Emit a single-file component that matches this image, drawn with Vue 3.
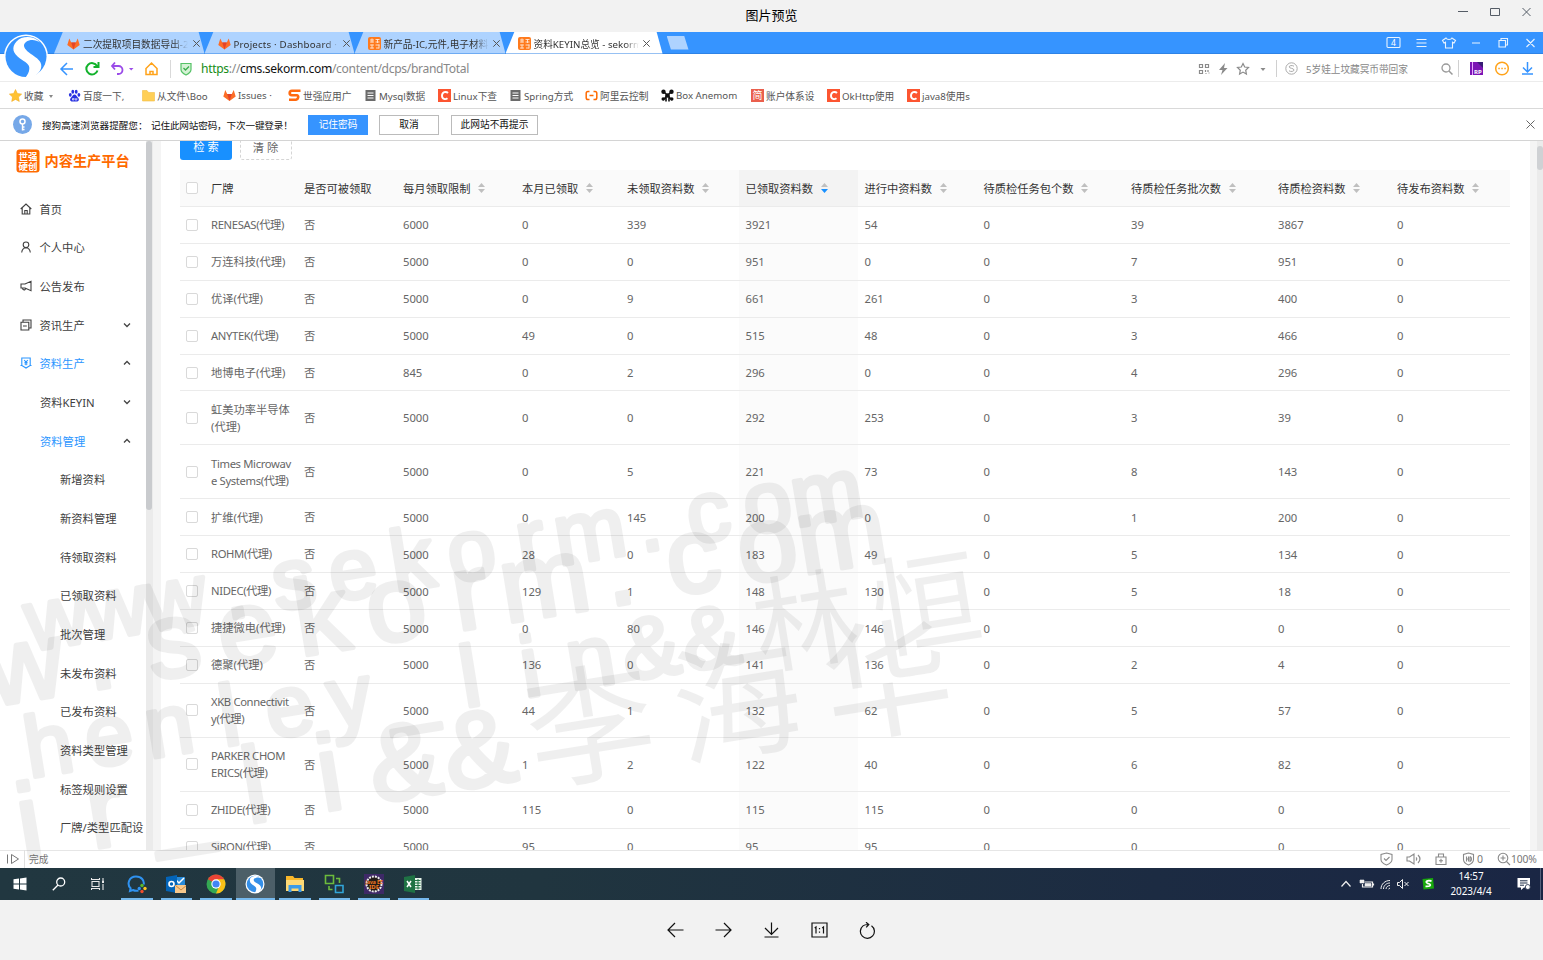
<script setup>
const tabs = [
  { icon: 'fox', text: '二次提取项目数据导出-2' },
  { icon: 'fox', text: 'Projects · Dashboard · ', wide: true },
  { icon: 'sek', text: '新产品-IC,元件,电子材料' },
  { icon: 'sek', text: '资料KEYIN总览 - sekorm', active: true },
]
const marks = [
  { icon: 'star', text: '收藏' },
  { icon: 'paw', text: '百度一下,' },
  { icon: 'folder', text: '从文件\\Boo' },
  { icon: 'fox', text: 'Issues ·' },
  { icon: 'swoosh', text: '世强应用广' },
  { icon: 'doc', text: 'Mysql数据' },
  { icon: 'c', text: 'Linux下查' },
  { icon: 'doc', text: 'Spring方式' },
  { icon: 'ali', text: '阿里云控制' },
  { icon: 'box', text: 'Box Anemom' },
  { icon: 'jian', text: '账户体系设' },
  { icon: 'c', text: 'OkHttp使用' },
  { icon: 'c', text: 'java8使用s' },
]
const menu = [
  { t: '首页', l: 1, icon: 'home' },
  { t: '个人中心', l: 1, icon: 'user' },
  { t: '公告发布', l: 1, icon: 'horn' },
  { t: '资讯生产', l: 1, icon: 'copy', arrow: 'down' },
  { t: '资料生产', l: 1, icon: 'yen', arrow: 'up', on: true },
  { t: '资料KEYIN', l: 2, arrow: 'down' },
  { t: '资料管理', l: 2, arrow: 'up', on: true },
  { t: '新增资料', l: 3 },
  { t: '新资料管理', l: 3 },
  { t: '待领取资料', l: 3 },
  { t: '已领取资料', l: 3 },
  { t: '批次管理', l: 3 },
  { t: '未发布资料', l: 3 },
  { t: '已发布资料', l: 3 },
  { t: '资料类型管理', l: 3 },
  { t: '标签规则设置', l: 3 },
  { t: '厂牌/类型匹配设', l: 3 },
]
const heads = ['厂牌', '是否可被领取', '每月领取限制', '本月已领取', '未领取资料数', '已领取资料数', '进行中资料数', '待质检任务包个数', '待质检任务批次数', '待质检资料数', '待发布资料数']
const rows = [
  [['RENESAS(代理)'], 6000, 0, 339, 3921, 54, 0, 39, 3867, 0],
  [['万连科技(代理)'], 5000, 0, 0, 951, 0, 0, 7, 951, 0],
  [['优译(代理)'], 5000, 0, 9, 661, 261, 0, 3, 400, 0],
  [['ANYTEK(代理)'], 5000, 49, 0, 515, 48, 0, 3, 466, 0],
  [['地博电子(代理)'], 845, 0, 2, 296, 0, 0, 4, 296, 0],
  [['虹美功率半导体', '(代理)'], 5000, 0, 0, 292, 253, 0, 3, 39, 0],
  [['Times Microwav', 'e Systems(代理)'], 5000, 0, 5, 221, 73, 0, 8, 143, 0],
  [['扩维(代理)'], 5000, 0, 145, 200, 0, 0, 1, 200, 0],
  [['ROHM(代理)'], 5000, 28, 0, 183, 49, 0, 5, 134, 0],
  [['NIDEC(代理)'], 5000, 129, 1, 148, 130, 0, 5, 18, 0],
  [['捷捷微电(代理)'], 5000, 0, 80, 146, 146, 0, 0, 0, 0],
  [['德聚(代理)'], 5000, 136, 0, 141, 136, 0, 2, 4, 0],
  [['XKB Connectivit', 'y(代理)'], 5000, 44, 1, 132, 62, 0, 5, 57, 0],
  [['PARKER CHOM', 'ERICS(代理)'], 5000, 1, 2, 122, 40, 0, 6, 82, 0],
  [['ZHIDE(代理)'], 5000, 115, 0, 115, 115, 0, 0, 0, 0],
  [['SiRON(代理)'], 5000, 95, 0, 95, 95, 0, 0, 0, 0],
]
const stamps = [
  { x: 61, y: 646, step: 60, size: 86, text: 'www.sekorm.com' },
  { x: 53, y: 774, step: 61, size: 86, text: 'henley_lin&&' },
  { x: 30, y: 700, step: 75.2, size: 107, text: 'w.sekorm.com' },
  { x: 35, y: 858, step: 76, size: 107, text: 'ir_li&&' },
]
const hans = [
  { x: 805, y: 620, s: 104, t: '林' },
  { x: 926, y: 602, s: 108, t: '恒' },
  { x: 590, y: 724, s: 128, t: '李' },
  { x: 737, y: 700, s: 128, t: '海' },
  { x: 887, y: 678, s: 128, t: '华' },
]
const apps = ['chat', 'outlook', 'chrome', 'sogou', 'files', 'vm', 'javaee', 'excel']
// Latin brand names are set slightly tighter than Chinese ones.
const isLatin = (s) => /^[A-Za-z]/.test(s)
</script>

<template>
  <div class="viewer">
    <header class="title">
      <span>图片预览</span>
      <svg class="winbtns" width="76" height="14" viewBox="0 0 76 14" fill="none" stroke="#555c66" stroke-width="1">
        <path d="M0 6.5H10M32.5 3.5h9v7h-9zM64.500 3l8 8M72.500 3l-8 8" />
      </svg>
    </header>

    <div class="shot">
      <svg class="logo" width="48" height="48" viewBox="0 0 48 48">
        <circle cx="24" cy="23.500" r="22" fill="#fff" />
        <circle cx="24" cy="23.500" r="20.500" fill="#3694ff" />
        <path d="M38 9.500C32 2.500 20 2.500 14.500 8.500C9 14.500 11 20.500 18 25.500C23 29 28 31 27.300 36C27 39.500 25.500 41.500 23.500 44.500L31 44C37.500 40.500 41 35 38.500 29.500C36.500 25.500 31 22.500 27 19.500C22.500 16 20 12 24 9C28 6 34 6.500 38 9.500Z" fill="#fff" />
      </svg>
      <div class="tabbar">
        <div class="tabs">
          <div v-for="(t, i) in tabs" :key="i" class="tab" :class="{ active: t.active, wide: t.wide }">
            <svg v-if="t.icon === 'fox'" width="13" height="12" viewBox="0 0 13 12">
              <path d="M6.500 11.500 .3 7 2.300.5 4.200 4.500h4.600L10.700.5l2 6.500z" fill="#fc6d26" /><path d="M6.500 11.500 4.200 4.500h4.600z" fill="#e24329" />
            </svg>
            <svg v-else width="13" height="13" viewBox="0 0 13 13"><rect width="13" height="13" rx="2" fill="#ff7a1c" /><path d="M2 3h4M2 5h4M4 1.500v4M7.500 2.500h4M7.500 5h4M9.500 2v4M2 8h4M2 11h4M4 7.500v4M7.500 8h4M8 11h3M11 7.500v4" stroke="#ffe9d8" stroke-width=".9" /></svg>
            <span class="tabtext">{{ t.text }}</span>
            <svg width="9" height="9" viewBox="0 0 9 9" stroke="#555" fill="none"><path d="m1.300 1.300 6.400 6.400M7.700 1.300 1.300 7.700" /></svg>
          </div>
        </div>
        <i class="newtab"></i>
        <svg class="ctl" width="150" height="16" viewBox="0 0 150 16" fill="none" stroke="#e8f3ff" stroke-width="1.100">
          <rect x="1" y="2.500" width="13" height="10" rx="1" /><text x="7.500" y="11" text-anchor="middle" font-size="8.500" stroke="none" fill="#fff">4</text>
          <path d="M30.500 4.500h10M30.500 8h10M30.500 11.500h10M60 3l-3.500 2.500 1.500 2.500 1.500-.8V13h7V7.200l1.500.8 1.500-2.500L66 3c-1 2-5 2-6 0zM86 8h8M113 5.500h6.500v6.500H113zM115 5.500v-2h6.500V10h-2M140.500 4l8 8M148.500 4l-8 8" />
        </svg>
      </div>

      <div class="nav">
        <svg class="navicons" width="134" height="20" viewBox="0 0 134 20" fill="none" stroke-width="1.800">
          <path d="M14 10H2.500M8 4 2 10l6 6" stroke="#3694ff" stroke-width="1.500" />
          <path d="M38 7a5.700 5.700 0 1 0 .5 4.500M39.500 3v5h-5" stroke="#12b22c" stroke-width="2" />
          <path d="M56 3.500 53 7l3 3.500M53 7h6.500a4 4 0 0 1 0 8H58" stroke="#9a4be8" /><path d="m70 9 2.200 2.500L74.500 9z" fill="#9a4be8" />
          <path d="M87 9.500 92.500 4 98 9.500M87 9v6.500h11V9M91 15.500v-3h3v3" stroke="#ffa31a" stroke-width="1.500" />
          <path d="M111.500 1v18" stroke="#d9d9d9" stroke-width="1" />
          <path d="M122 4.500h10v6c0 3-3 4.500-5 5.500-2-1-5-2.500-5-5.500z" fill="#d5f2d5" stroke="#55c266" stroke-width="1.200" /><path d="m124.500 9 2 2 3.500-3.500" stroke="#39ad4b" stroke-width="1.300" />
        </svg>
        <span class="url"><b class="g">https</b>://<b>cms.sekorm.com</b>/content/dcps/brandTotal</span>
        <svg class="navr" width="72" height="20" viewBox="0 0 72 20" fill="none" stroke="#8a8a8a" stroke-width="1.200">
          <path d="M1.500 5.500h3v3h-3zM7.500 5.500h3v3h-3zM1.500 11.500h3v3h-3zM7.500 11v2M10 11v2M7.500 14.500h1M10.500 14h1" />
          <path d="m27 4-6 7h3.500L23 16l6.500-7H26z" fill="#8a8a8a" stroke="none" />
          <path d="m45 4.500 1.700 3.500 3.800.5-2.800 2.700.7 3.800-3.400-1.900-3.400 1.900.7-3.800L39.500 8.500l3.800-.5z" />
          <path d="m62.500 9 2.500 3L67.500 9z" fill="#8a8a8a" stroke="none" />
        </svg>
        <i class="sep"></i>
        <svg class="sg" width="13" height="13" viewBox="0 0 13 13" fill="none" stroke="#aaa"><circle cx="6.500" cy="6.500" r="5.700" /><path d="M9 4.200C7 3 4 3.500 4.200 5c.2 1.700 4.800 1 4.800 3 0 1.500-3 2-5 .8" /></svg>
        <span class="hot">5岁娃上坟藏冥币带回家</span>
        <svg class="ext" width="98" height="20" viewBox="0 0 98 20" fill="none">
          <circle cx="5" cy="9" r="4" stroke="#999" stroke-width="1.300" /><path d="m8 12 3.500 3.500" stroke="#999" stroke-width="1.500" />
          <path d="M17.500 1v17" stroke="#d0d0d0" />
          <rect x="29" y="3" width="13" height="13" fill="#7c14b5" /><path d="M31.500 3v13" stroke="#e9a7ff" /><path d="M36 3h6v6z" fill="#371c74" /><text x="33" y="14.500" font-size="6" font-weight="700" fill="#fff">RP</text>
          <circle cx="61" cy="9.500" r="6.300" stroke="#ffa31a" stroke-width="1.500" /><path d="M57.300 9.500h1.500M60.300 9.500h1.500M63.300 9.500h1.500" stroke="#ffa31a" stroke-width="1.400" />
          <path d="M86.500 3v10M82 8.500l4.500 4.500L91 8.500M81 15h11" stroke="#3694ff" stroke-width="1.500" />
        </svg>
      </div>

      <div class="marks">
        <div v-for="(m, i) in marks" :key="i" class="mark">
          <svg width="13" height="13" viewBox="0 0 13 13">
            <path v-if="m.icon === 'star'" d="m6.500.5 1.900 4 4.300.6-3.200 3 .8 4.400-3.800-2.100-3.800 2.100.8-4.400-3.200-3 4.300-.6z" fill="#ffc233" stroke="#f1a91d" stroke-width=".5" />
            <g v-else-if="m.icon === 'paw'" fill="#2932e1"><ellipse cx="2.300" cy="5.800" rx="1.400" ry="1.900" /><ellipse cx="4.800" cy="2.800" rx="1.400" ry="2" /><ellipse cx="8.200" cy="2.800" rx="1.400" ry="2" /><ellipse cx="10.900" cy="5.800" rx="1.400" ry="1.900" /><path d="M6.500 5.500c1.600 0 2 1.700 3.300 2.900 2 1.700 1 4-1 4-1.300 0-3.300 0-4.600 0-2 0-3-2.300-1-4C4.500 7.200 4.900 5.500 6.500 5.500z" /><path d="M4.500 9.500h1.300v1.500H4.500zM7.200 9v2h1.600V9" fill="none" stroke="#fff" stroke-width=".7" /></g>
            <path v-else-if="m.icon === 'folder'" d="M.5 1.500h4.500l1.500 2h6v8.500H.5z" fill="#ffcf56" stroke="#f2bd44" stroke-width=".6" />
            <g v-else-if="m.icon === 'fox'"><path d="M6.500 12 .3 7.500l2-6.500 1.900 4h4.600l1.900-4 2 6.500z" fill="#fc6d26" /><path d="M6.500 12 4.200 5h4.600z" fill="#e24329" /></g>
            <path v-else-if="m.icon === 'swoosh'" d="M12.500 1.800H4C1 2 .8 6 4 6.300h5c2 .3 1.500 4-1 4.400H1" fill="none" stroke="#ff6a10" stroke-width="2.600" />
            <g v-else-if="m.icon === 'doc'"><rect x="1.500" y="1" width="10" height="11" fill="#6b6b6b" /><path d="M3.500 4h6M3.500 6.500h6M3.500 9h6" stroke="#fff" /></g>
            <g v-else-if="m.icon === 'c'"><rect width="13" height="13" fill="#fc5531" /><path d="M10 4C8 2 4 3 4 6.800c0 3.500 3.500 4 5.500 2.500" fill="none" stroke="#fff" stroke-width="1.900" /></g>
            <path v-else-if="m.icon === 'ali'" d="M4.500 2.500H3c-1 0-1.800.5-1.800 1.800v4.400c0 1.300.8 1.800 1.800 1.800h1.500M8.500 2.500H10c1 0 1.800.5 1.800 1.800v4.400c0 1.300-.8 1.800-1.800 1.800H8.500M4.500 6.500h4" fill="none" stroke="#ff6a00" stroke-width="1.500" />
            <g v-else-if="m.icon === 'box'" fill="#111"><circle cx="2.500" cy="2.800" r="2.200" /><circle cx="10.500" cy="2.800" r="2.200" /><circle cx="2.200" cy="10" r="1.700" /><circle cx="10.800" cy="10" r="1.700" /><circle cx="6.500" cy="6.500" r="2.300" /><path d="m2 2 9 9M11 2l-9 9M5 7v5.500M8 7v5.500" stroke="#111" stroke-width="1.600" /></g>
            <g v-else><rect width="13" height="13" fill="#ea5f4d" /><text x="6.500" y="10.300" font-size="10" text-anchor="middle" fill="#fff">简</text></g>
          </svg>
          <span>{{ m.text }}</span>
          <i v-if="i === 0" class="caret"></i>
        </div>
      </div>

      <div class="notice">
        <svg width="19" height="19" viewBox="0 0 19 19"><circle cx="9.500" cy="9.500" r="9.500" fill="#76a8e8" /><circle cx="9.500" cy="6.500" r="2.500" fill="none" stroke="#fff" stroke-width="1.500" /><path d="M9.500 9v6.500M9.500 12h2M9.500 14.500h2" stroke="#fff" stroke-width="1.400" /></svg>
        <span class="n1">搜狗高速浏览器提醒您：</span>
        <span class="n2">记住此网站密码，下次一键登录！</span>
        <button class="nb p">记住密码</button>
        <button class="nb q">取消</button>
        <button class="nb r">此网站不再提示</button>
        <svg class="nx" width="9" height="9" viewBox="0 0 9 9" stroke="#666" fill="none"><path d="m.5.500 8 8M8.500.5l-8 8" /></svg>
      </div>

      <main class="main">
        <aside class="side">
          <div class="brand">
            <svg width="25" height="25" viewBox="0 0 25 25"><rect x=".5" y=".5" width="23" height="23" rx="3" fill="#ff6a00" /><g fill="#fff" font-size="9.500" font-weight="700" text-anchor="middle"><text x="7.300" y="10.500">世</text><text x="16.800" y="10.500">强</text><text x="7.300" y="20.500">硬</text><text x="16.800" y="20.500">创</text></g></svg>
            <span>内容生产平台</span>
          </div>
          <div v-for="(m, i) in menu" :key="i" class="mi" :class="['l' + m.l, { on: m.on }]">
            <svg v-if="m.icon" class="mico" width="12" height="12" viewBox="0 0 12 12" fill="none" stroke="currentColor" stroke-width="1.100">
              <path v-if="m.icon === 'home'" d="M.7 6 6 1l5.300 5M2.200 5v6h7.600V5M4.800 11V7.500h2.400V11" />
              <path v-else-if="m.icon === 'user'" d="M6 1a2.800 2.800 0 1 1 0 5.600A2.800 2.800 0 0 1 6 1zM1.700 11.500C2 8.700 3.500 7 6 6.800c2.500.2 4 1.900 4.300 4.700" />
              <path v-else-if="m.icon === 'horn'" d="M11 1.300v9.400L5 8H1V4h4zM2.500 8c0 2.500 3 2.500 3 .3" />
              <path v-else-if="m.icon === 'copy'" d="M1 3.200h7.800V11H1zM3 3V1h8v8H9M3 7h3.800" />
              <path v-else d="M1.800 1h8.400v7.500L6 11 1.800 8.500zM.5 8.500h1.300M10.200 8.500h1.300M4.200 3 6 5.200 7.800 3M6 5.200v3M4.500 5.500h3M4.500 7h3" />
            </svg>
            <span>{{ m.t }}</span>
            <svg v-if="m.arrow" class="arr" width="8" height="6" viewBox="0 0 8 6" fill="none" stroke="#444" stroke-width="1.300"><path :d="m.arrow === 'up' ? 'M1 4.500 4 1.500 7 4.500' : 'M1 1.500 4 4.500 7 1.500'" /></svg>
          </div>
        </aside>
        <div class="sscroll"><i></i></div>
        <div class="gut"></div>
        <section class="content">
          <div class="btns"><button class="search">检 索</button><button class="clear">清 除</button></div>
          <div class="table">
            <div class="row head">
              <div class="cell"><i class="cb"></i></div>
              <div v-for="(h, i) in heads" :key="h" class="cell" :class="{ hl: i === 5 }">
                <span>{{ h }}</span>
                <svg v-if="i > 1" class="sort" width="7" height="10" viewBox="0 0 7 10"><path d="M0 4 3.500 0 7 4z" fill="#bfbfbf" /><path d="M0 6 3.500 10 7 6z" :fill="i === 5 ? '#1890ff' : '#bfbfbf'" /></svg>
              </div>
            </div>
            <div v-for="(r, k) in rows" :key="k" class="row" :class="{ tall: r[0].length > 1 }">
              <div class="cell"><i class="cb"></i></div>
              <div class="cell name" :class="{ latin: isLatin(r[0][0]) }"><span v-for="n in r[0]" :key="n">{{ n }}</span></div>
              <div class="cell can">否</div>
              <div v-for="(v, i) in r.slice(1)" :key="i" class="cell" :class="{ hl: i === 3 }">{{ v }}</div>
            </div>
          </div>
        </section>
        <div class="gut2"></div>
        <div class="rscroll"><i></i></div>
      </main>

      <div class="status">
        <svg width="26" height="18" viewBox="0 0 26 18" fill="none" stroke="#777"><path d="M7.500 4.500v9M11.500 4.500v9l7-4.500z" /><path d="M24.500 0v18" stroke="#e0e0e0" /></svg>
        <span class="done">完成</span>
        <svg class="sticons" width="100" height="16" viewBox="0 0 100 16" fill="none" stroke="#8a8a8a" stroke-width="1.100">
          <path d="M6.500 2 12 3.500v5C12 11.500 9 13 6.500 14 4 13 1 11.500 1 8.500v-5zM4 7.500l2 2L9.500 6" />
          <path d="M27 6h2.500L34 3v10l-4.500-3H27zM36 6.500c1 1 1 2 0 3M38 4c2.500 2.500 2.500 5.500 0 8" />
          <path d="M56 6h10v7.500H56zM58.500 6V3h5v3M61 7.800v4M59 9.800h4" />
          <path d="M88.500 2 93.500 3.500v5c0 3-2.500 4.500-5 5.500-2.500-1-5-2.500-5-5.500v-5zM86.500 5.500v5M88.500 5.500v5M86.500 8h2M90 5.500v5c2-.5 2-4.500 0-5" />
        </svg>
        <span class="zero">0</span>
        <svg width="14" height="16" viewBox="0 0 14 16" fill="none" stroke="#8a8a8a" stroke-width="1.100"><circle cx="6" cy="7" r="4.800" /><path d="M3.500 7h5M6 4.500v5M9.500 10.500l3.500 3.500" /></svg>
        <span class="pct">100%</span>
      </div>

      <div class="task">
        <div class="sys"><svg width="14" height="14" viewBox="0 0 14 14" fill="#fff"><path d="M.5 2.300 6 1.500v5H.5zM7 1.400l6.500-.9v6H7zM.5 7.500H6v5L.5 11.700zM7 7.500h6.500v6L7 12.600z" /></svg></div>
        <div class="sys"><svg width="14" height="14" viewBox="0 0 14 14" fill="none" stroke="#fff" stroke-width="1.300"><circle cx="8.700" cy="5" r="4" /><path d="M6 8 .8 13.300" /></svg></div>
        <div class="sys"><svg width="14" height="14" viewBox="0 0 14 14" fill="none" stroke="#e8e8e8" stroke-width="1.100"><path d="M.5 1v1.500h8V1M.5 13v-1.500h8V13M1 4.500h7v5H1zM12 1v2.500M12 7v6" /><path d="M11 3.500h2V6h-2z" fill="#e8e8e8" stroke="none" /></svg></div>
        <div v-for="a in apps" :key="a" class="app" :class="{ cur: a === 'sogou' }">
          <svg width="20" height="20" viewBox="0 0 20 20">
            <g v-if="a === 'chat'"><path d="M11.500 16.500c-2 .5-4 .3-5.500-.5L3 17l.6-2.700C-.5 10 2 2.500 9 2.500c5.500 0 8.500 4 7.700 8" fill="none" stroke="#2f92f0" stroke-width="2" /><circle cx="15" cy="11.500" r="1.700" fill="#59b82c" /><circle cx="18" cy="14.500" r="1.700" fill="#ffc51f" /><circle cx="15" cy="17.500" r="1.700" fill="#f24d2c" /><circle cx="12.300" cy="14.500" r="1.700" fill="#2f92f0" /></g>
            <g v-else-if="a === 'outlook'"><path d="M9 3h10v11H9z" fill="#2689d8" /><path d="m10 6 3 3 5-5" stroke="#fff" stroke-width="1.500" fill="none" /><path d="m0 3 11-2v18L0 17z" fill="#0364b8" /><circle cx="5.500" cy="10" r="2.500" fill="none" stroke="#fff" stroke-width="1.600" /><path d="M9 11h12v8H9z" fill="#f8c88b" /><path d="m9 11 6 5 6-5" fill="none" stroke="#c98740" /></g>
            <g v-else-if="a === 'chrome'"><circle cx="10" cy="10" r="9.500" fill="#34a853" /><path d="M10 10 1.800 5.300A9.500 9.500 0 0 1 18.200 5.300z" fill="#ea4335" /><path d="M10 19.500 14 10l4.200-4.700A9.500 9.500 0 0 1 10 19.500z" fill="#fbc116" /><path d="M10 5.300h8.200L15 10z" fill="#fbc116" /><circle cx="10" cy="10" r="4.700" fill="#fff" /><circle cx="10" cy="10" r="3.600" fill="#4285f4" /></g>
            <g v-else-if="a === 'sogou'"><circle cx="10" cy="10" r="9.500" fill="#fff" /><circle cx="10" cy="10" r="8.300" fill="#348fe8" /><path d="M16 4C12 .5 3.500 2 5 7.500c1 4 6.500 4 6.300 7.500-.2 2-1 3-1.700 4l3-.3c3.500-2 4.500-5 2.500-7.300C13.500 9.500 8.500 8.500 8.700 5.800c.3-2 4.500-3 7.300-1.800z" fill="#fff" /></g>
            <g v-else-if="a === 'files'"><path d="M1 2h7l1.500 2H18v13H1z" fill="#f7b72b" /><path d="M1 6h18v11H1z" fill="#ffd975" /><path d="M3.500 18v-7h13v7h-3v-3.500h-7V18z" fill="#3c9be8" /></g>
            <g v-else-if="a === 'vm'" fill="none" stroke-width="1.600"><path d="M1.500 1.500h8v8h-8z" stroke="#6cbb3c" /><path d="M11.500 11.500h7.500v7h-7.500z" stroke="#32a5d8" /><path d="M12 4.500h3.500V9M5 12v3.500h3.500" stroke="#6cbb3c" /></g>
            <g v-else-if="a === 'javaee'"><rect width="20" height="20" fill="#3e2967" /><circle cx="10" cy="10" r="7.500" fill="#231b19" stroke="#ececec" stroke-width="2" stroke-dasharray="2 1" /><text x="10" y="9.500" text-anchor="middle" font-size="5" font-weight="700" fill="#f47b20">Java EE</text><text x="10" y="15" text-anchor="middle" font-size="6" font-weight="700" fill="#f47b20">IDE</text></g>
            <g v-else><path d="M10 4h8.500v12H10z" fill="#e9f5ec" /><path d="M12 6.500h5.500M12 9h5.500M12 11.500h5.500M12 14h5.500M15 5v10.500" stroke="#1f7244" /><path d="m1 3 11-2v18L1 17z" fill="#1f7244" /><path d="m4 7 4 6M8 7l-4 6" stroke="#fff" stroke-width="1.500" /></g>
          </svg>
        </div>
        <svg class="tray" width="96" height="16" viewBox="0 0 96 16" fill="none" stroke="#f0f0f0" stroke-width="1.200">
          <path d="m1.500 10.500 4.500-5 4.500 5" />
          <path d="M24.500 6h8v5h-10V8M33.500 7.500v2" /><path d="M20 4h4v3h-4zM25 7.500h6v2.500h-6z" fill="#f0f0f0" stroke-width=".6" />
          <path d="M41 13c0-5 4-8.500 9-8.500M43.500 13c0-3.500 3-6 6.500-6M46 13c0-2 2-3.500 4-3.500M48.500 13l1.500-1" stroke-width="1" />
          <path d="M57.500 6.500h2l3-3v9l-3-3h-2zM64.500 6l4 4M68.500 6l-4 4" stroke-width="1" />
          <path d="m82.500 3 10.500-1 1 10.500-10.500 1z" fill="#18a80c" stroke="none" /><path d="M91.500 5c-5-1-6.500 1-4 2.300 4 .7 4 3.500-2 3" stroke="#fff" stroke-width="1.800" />
        </svg>
        <div class="clock"><span>14:57</span><span>2023/4/4</span></div>
        <svg class="note" width="14" height="14" viewBox="0 0 14 14"><path d="M.5 1h12.500v9.500H7L4 13v-2.500H.5z" fill="#fff" /><path d="M3 3.800h7.500M3 6h7.500M3 8.200h4" stroke="#1b2a44" /><circle cx="10.800" cy="10" r="2.500" fill="#fff" stroke="#1b2a44" stroke-width=".8" /></svg>
        <i class="edge"></i>
      </div>

      <svg class="stamp" width="1543" height="836" viewBox="0 32 1543 836">
        <g v-for="(s, i) in stamps" :key="i" opacity=".06" :transform="`translate(${s.x} ${s.y}) rotate(-9.200)`" :font-size="s.size" text-anchor="middle" stroke="#000" stroke-width="4.500" stroke-linejoin="round">
          <text v-for="(c, j) in s.text" :key="j" :x="j * s.step" y="0">{{ c }}</text>
        </g>
        <text v-for="h in hans" :key="h.t" class="han" opacity=".06" :transform="`translate(${h.x} ${h.y}) rotate(-9.200)`" :font-size="h.s" x="0" :y="h.s * 0.38" text-anchor="middle">{{ h.t }}</text>
      </svg>
    </div>

    <footer class="tools">
      <svg width="17" height="16" viewBox="0 0 17 16"><path d="M16.500 8H1M8 1 1 8l7 7" /></svg>
      <svg width="17" height="16" viewBox="0 0 17 16"><path d="M.5 8H16M9 1l7 7-7 7" /></svg>
      <svg width="17" height="16" viewBox="0 0 17 16"><path d="M8.500.5v11.500M2 6l6.500 6.500L15 6M1.500 15h14" /></svg>
      <svg width="17" height="16" viewBox="0 0 17 16"><path d="M1 1h15v14H1zM3.700 6 5 5v6.500M11.200 6l1.300-1v6.500M8.500 6v1.200M8.500 9.500v1.200" /></svg>
      <svg width="17" height="17" viewBox="0 0 17 17"><path d="M12.500 3.700a7 7 0 1 1-8.500.2q2-1.600 5.500-1.400M7 .2l2.800 2.300L7.200 5.400" /></svg>
    </footer>
  </div>
</template>

<style>
html, body { margin: 0; overflow: hidden; }
</style>
<style scoped>
.viewer { width: 1543px; height: 960px; background: #f2f2f2; display: flex; flex-direction: column; font-family: "Noto Sans", "Noto Sans CJK SC", sans-serif; color: #333; overflow: hidden; }
.viewer * { box-sizing: border-box; }
svg { flex: none; display: block; }
i { display: block; font-style: normal; }
button { font-family: inherit; margin: 0; padding: 0; }
.title { height: 32px; flex: none; display: flex; align-items: center; justify-content: center; position: relative; font-size: 13px; color: #000; padding-bottom: 3px; }
.winbtns { position: absolute; right: 9px; top: 5px; }
.shot { height: 868px; flex: none; position: relative; background: #fff; display: flex; flex-direction: column; overflow: hidden; }
.logo { position: absolute; left: 2px; top: 1px; z-index: 3; }
.tabbar { height: 22px; flex: none; background: #3694ff; border-bottom: 1px solid #2e83e6; display: flex; align-items: center; }
.tabs { display: grid; grid-template-columns: 150.500px 150px 151px 157px; margin-left: 54px; height: 22px; }
.tab { height: 22px; display: flex; align-items: center; padding-left: 13px; background: #aed3ff; clip-path: polygon(9px 0, calc(100% - 6px) 0, 100% 100%, 0 100%); font-size: 9.700px; padding-top: 3px; }
.tab.active { background: #fff; padding-left: 12px; }
.tab.wide { letter-spacing: .2px; }
.tab svg { margin-top: -1px; }
.tab svg:last-child { margin-left: -1.500px; }
.tabtext { width: 105px; flex: none; margin: 0 5px 0 3px; overflow: hidden; white-space: nowrap; -webkit-mask-image: linear-gradient(90deg, #000 86%, transparent); mask-image: linear-gradient(90deg, #000 86%, transparent); }
.newtab { width: 22px; height: 14px; background: #aed3ff; clip-path: polygon(0 0, 80% 0, 100% 100%, 20% 100%); margin-left: 4px; }
.ctl { margin-left: auto; margin-right: 7.500px; }
.nav { height: 28px; flex: none; display: flex; align-items: center; border-bottom: 1px solid #ececec; padding-top: 2px; }
.navicons { margin-left: 59px; }
.url { margin-left: 8px; font-size: 12.100px; letter-spacing: -.33px; color: #888; white-space: nowrap; }
.url b { font-weight: 400; color: #111; }
.url b.g { color: #168d16; }
.navr { margin-left: auto; }
.sep { width: 1px; height: 17px; background: #d0d0d0; margin-left: 6px; }
.sg { margin-left: 8px; }
.hot { font-size: 9.700px; color: #888; width: 135px; margin-left: 8px; white-space: nowrap; letter-spacing: -.05px; }
.ext { margin-right: 4px; }
.marks { height: 27px; flex: none; display: grid; grid-template-columns: 59px 74px 81px 65px 76px 74px 71px 76px 76px 90px 76px 80px 80px; padding-left: 9px; border-bottom: 1px solid #d9d9d9; align-items: center; font-size: 9.700px; color: #555; padding-top: 1px; }
.mark { display: flex; align-items: center; gap: 2px; white-space: nowrap; }
.caret { border: 2.500px solid transparent; border-top: 3px solid #888; margin: 3px 0 0 4px; }
.notice { height: 32px; flex: none; display: flex; align-items: center; border-bottom: 1px solid #d4d4d4; padding-left: 13px; font-size: 9.600px; color: #111; white-space: nowrap; }
.n1 { margin-left: 10px; width: 109px; }
.n2 { width: 157px; letter-spacing: -.15px; }
.nb { height: 20px; font-size: 9.700px; border: 1px solid #bbb; background: #fff; color: #111; line-height: 17px; }
.nb.p { width: 60px; background: #3694ff; border-color: #3694ff; color: #fff; }
.nb.q { width: 60px; margin-left: 11px; }
.nb.r { width: 87px; margin-left: 12px; }
.nx { margin-left: auto; margin-right: 8px; }
.main { flex: 1; min-height: 0; display: flex; overflow: hidden; border-bottom: 1px solid #e6e6e6; }
.side { width: 145.500px; flex: none; overflow: hidden; }
.brand { height: 48.400px; display: flex; align-items: center; padding: 0 0 7.500px 15.500px; gap: 4px; color: #ff6a00; font-weight: 700; font-size: 14.200px; white-space: nowrap; }
.brand span { margin-top: -2px; }
.mi { height: 38.680px; display: flex; align-items: center; font-size: 11.300px; color: #404040; white-space: nowrap; position: relative; }
.l1 { padding-left: 20px; }
.l2 { padding-left: 40px; }
.l3 { padding-left: 60px; }
.mico { margin-right: 7.500px; }
.on { color: #2b96ff; }
.arr { margin-left: auto; margin-right: 15px; }
.sscroll { width: 7.500px; background: #ebebeb; flex: none; }
.sscroll i { width: 6.500px; height: 369px; background: #c9cbce; border-radius: 4px; }
.gut { width: 8px; background: #f4f4f4; flex: none; }
.content { width: 1369px; flex: none; padding: 0 20px 0 19px; overflow: hidden; }
.btns { display: flex; height: 28.500px; align-items: flex-start; gap: 7.500px; }
.btns button { height: 26px; margin-top: -7px; width: 52px; font-size: 11.300px; border-radius: 3px; line-height: 26px; }
.search { background: #1890ff; border: 0; color: #fff; }
.btns .clear { background: #fff; border: 1px dashed #d5d5d5; color: #666; }
.row { display: grid; grid-template-columns: 24.500px 93px 99px 119px 105px 118.500px 119px 119px 147.500px 147px 119px 119.500px; height: 36.950px; border-bottom: 1px solid #ebebeb; font-size: 11.250px; color: #666; }
.row.tall { height: 53.900px; }
.row.head { background: #fafafa; color: #333; height: 37.300px; }
.cell { display: flex; align-items: center; padding-left: 6.500px; white-space: nowrap; }
.cell.name { flex-direction: column; align-items: flex-start; justify-content: center; line-height: 16.900px; padding-top: 1.500px; }
.cell.latin { letter-spacing: -.35px; }
.cell.can { padding-bottom: 1.500px; }
.cell:first-child { padding-left: 6px; }
.hl { background: #fbfbfb; }
.head .hl { background: #f3f3f3; }
.cb { width: 12px; height: 12px; border: 1px solid #d9d9d9; border-radius: 2px; background: #fff; }
.sort { margin-left: 7.500px; }
.gut2 { width: 7px; background: #f4f4f4; flex: none; }
.rscroll { width: 6px; background: #ebebeb; flex: none; padding-top: 5px; }
.rscroll i { height: 24px; background: #cfd1d4; border-radius: 3px; }
.status { height: 17px; flex: none; display: flex; align-items: center; font-size: 9.700px; color: #777; padding-bottom: 1px; }
.done { margin-left: 3px; }
.sticons { margin-left: auto; margin-right: -2.500px; }
.zero { width: 20px; font-size: 10.500px; padding-left: 0; }
.pct { width: 32px; font-size: 10.300px; letter-spacing: -.1px; }
.task { height: 32px; flex: none; display: flex; align-items: center; background: linear-gradient(90deg, #213740 0%, #20353f 35%, #1c2b42 75%, #1a2644 100%); color: #fff; }
.sys { width: 39px; height: 32px; display: flex; align-items: center; justify-content: center; }
.app { width: 39.500px; height: 32px; display: flex; align-items: center; justify-content: center; position: relative; }
.app::after { content: ""; position: absolute; left: 4px; right: 4px; bottom: 0; height: 2px; background: #76b9ed; }
.app.cur { background: #4c5f68; }
.app.cur::after { left: 0; right: 0; }
.tray { margin-left: auto; }
.clock { width: 60px; margin-left: 5.500px; display: flex; flex-direction: column; align-items: center; font-size: 9.900px; line-height: 15px; }
.note { margin-left: 16px; }
.edge { width: 1px; height: 32px; background: #55607a; margin-left: 9px; margin-right: 2px; }
.stamp { position: absolute; left: 0; top: 0; font-family: "Liberation Sans", sans-serif; pointer-events: none; }
.han { font-family: "Noto Sans CJK SC", sans-serif; }
.tools { flex: 1; display: flex; align-items: center; justify-content: center; gap: 31px; }
.tools svg { fill: none; stroke: #111; stroke-width: 1.200; }
</style>
